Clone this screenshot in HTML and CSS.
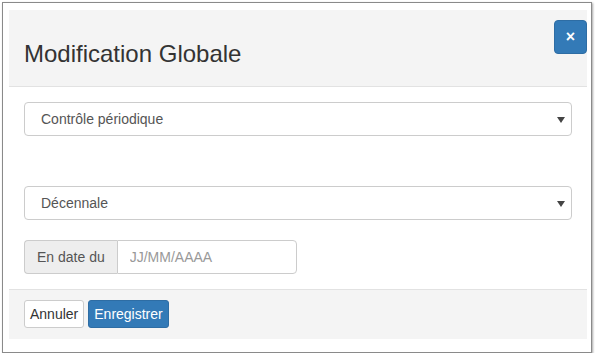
FILE: index.html
```html
<!DOCTYPE html>
<html lang="fr">
<head>
    <meta charset="UTF-8">
    <meta name="viewport" content="width=device-width, initial-scale=1.0">
    <title>Modification Globale</title>
    <link rel="stylesheet" href="styles.css">
</head>
<body>
    <div class="window">
        <div class="modal">
            <div class="modal-header">
                <h4 class="modal-title">Modification Globale</h4>
                <button class="close-btn" type="button">&times;</button>
            </div>
            <div class="modal-body">
                <div class="select">
                    <span>Contrôle périodique</span>
                    <span class="caret"></span>
                </div>
                <div class="select select-second">
                    <span>Décennale</span>
                    <span class="caret"></span>
                </div>
                <div class="input-group">
                    <span class="addon">En date du</span>
                    <input type="text" class="date-input" placeholder="JJ/MM/AAAA">
                </div>
            </div>
            <div class="modal-footer">
                <button class="btn btn-default" type="button">Annuler</button>
                <button class="btn btn-primary" type="button">Enregistrer</button>
            </div>
        </div>
    </div>
</body>
</html>
```

FILE: styles.css
```css
* {
    margin: 0;
    padding: 0;
    box-sizing: border-box;
    font-family: 'Liberation Sans', Arial, sans-serif;
}

body {
    background: #ffffff;
    color: #333333;
    font-size: 14px;
}

.window {
    margin: 2px 0 0 2px;
    width: 590px;
    height: 351px;
    border: 1px solid #8a8a8a;
    box-shadow: 1px 1px 2px rgba(0, 0, 0, 0.35);
    padding: 7px 4px 0 6px;
    background: #ffffff;
}

.modal-header {
    display: flex;
    justify-content: space-between;
    align-items: flex-start;
    height: 77px;
    padding-left: 15px;
    background: #f4f4f4;
    border-bottom: 1px solid #e2e2e2;
}

.modal-title {
    font-size: 24px;
    font-weight: normal;
    line-height: 26px;
    margin-top: 31px;
    color: #333333;
}

.close-btn {
    margin-top: 10px;
    width: 33px;
    height: 34px;
    border: 1px solid #2e6da4;
    border-radius: 4px;
    background: #337ab7;
    color: #ffffff;
    font-size: 16px;
    font-weight: bold;
    line-height: 30px;
    cursor: pointer;
}

.modal-body {
    padding: 15px;
}

.select {
    display: flex;
    justify-content: space-between;
    align-items: center;
    height: 34px;
    padding: 0 6px 0 16px;
    border: 1px solid #cccccc;
    border-radius: 4px;
    color: #555555;
    background: #ffffff;
}

.select-second {
    margin-top: 50px;
}

.caret {
    width: 0;
    height: 0;
    border-left: 4px solid transparent;
    border-right: 4px solid transparent;
    border-top: 6px solid #444444;
    margin-top: 1px;
}

.input-group {
    display: flex;
    width: 273px;
    height: 34px;
    margin-top: 20px;
}

.addon {
    display: flex;
    align-items: center;
    padding: 0 12px;
    background: #eeeeee;
    border: 1px solid #cccccc;
    border-right: none;
    border-radius: 4px 0 0 4px;
    color: #555555;
}

.date-input {
    flex: 1;
    min-width: 0;
    padding: 0 12px;
    border: 1px solid #cccccc;
    border-radius: 0 4px 4px 0;
    font-size: 14px;
    color: #555555;
    outline: none;
}

.date-input::placeholder {
    color: #999999;
}

.modal-footer {
    display: flex;
    gap: 4px;
    padding: 10px 15px 11px;
    background: #f4f4f4;
    border-top: 1px solid #e2e2e2;
}

.btn {
    height: 28px;
    padding: 0 5px;
    border-radius: 3px;
    font-size: 14px;
    line-height: 26px;
    cursor: pointer;
}

.btn-default {
    background: #ffffff;
    border: 1px solid #cccccc;
    color: #333333;
}

.btn-primary {
    background: #337ab7;
    border: 1px solid #2e6da4;
    color: #ffffff;
}
```
